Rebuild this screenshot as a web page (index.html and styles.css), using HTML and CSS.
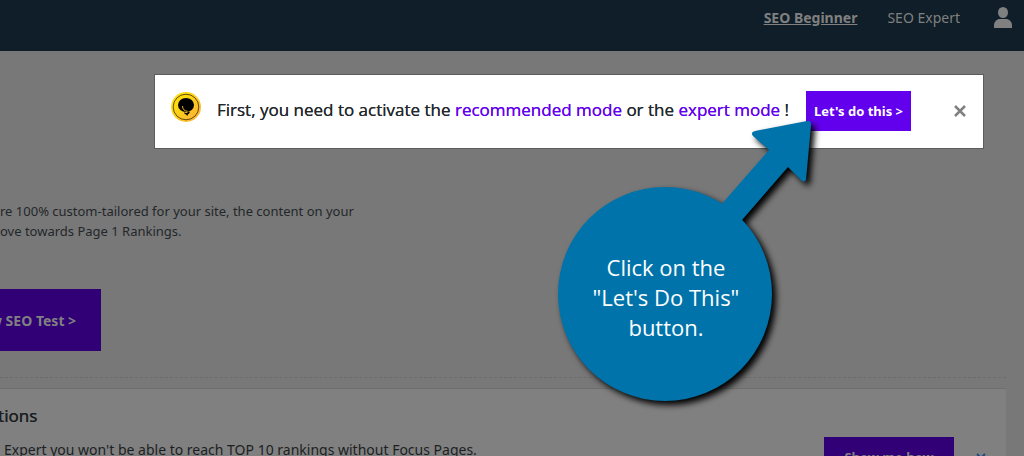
FILE: index.html
```html
<!DOCTYPE html>
<html lang="en">
  <head>
    <title>SEO Beginner</title>
    <meta charset="utf-8">
    <link rel="stylesheet" href="styles.css">
  </head>
  <body>

  <header class="topbar">
    <nav class="modes">
      <a class="mode active" href="#beginner">SEO Beginner</a>
      <a class="mode" href="#expert">SEO Expert</a>
    </nav>
    <a class="account" href="#account" aria-label="Account">
      <svg width="18" height="21" viewBox="0 0 18 21" fill="currentColor">
        <ellipse cx="9" cy="5.5" rx="5" ry="5.5"/>
        <path d="M0 21v-2.500C0 14.500 3 12 6 12h6c3 0 6 2.500 6 6.500V21z"/>
      </svg>
    </a>
  </header>

  <main class="content">
    <section class="notice">
      <svg class="logo" width="30" height="30" viewBox="0 0 30 30">
        <defs>
          <linearGradient id="gold" x1="0" y1="0" x2="1" y2="1">
            <stop offset="0.3" stop-color="#fedb10"/>
            <stop offset="1" stop-color="#fdaa3c"/>
          </linearGradient>
        </defs>
        <circle cx="15" cy="15" r="15" fill="url(#gold)"/>
        <circle cx="15" cy="15" r="12.800" fill="none" stroke="#3a2c08" stroke-width="0.8"/>
        <ellipse cx="15" cy="13" rx="8" ry="7"/>
        <path d="M11.500 14c0 3 1.800 5.200 5 5.200" fill="none" stroke="#fdc926" stroke-width="0.9"/>
        <path d="M13 20.300c2 1 3.500.8 4.500-.8l1.300.6c-.2 1.200-.9 1.900-1.800 2.200l-.6 1.700-1.200-1.600c-1.300 0-2-.8-2.200-2.100z"/>
      </svg>
      <p class="notice-text">First, you need to activate the <a href="#recommended">recommended mode</a> or the <a href="#expert">expert mode</a> !</p>
      <button class="btn" type="button">Let's do this &gt;</button>
      <button class="close" type="button" aria-label="Close">
        <svg width="12" height="12" viewBox="0 0 12 12" fill="none" stroke="currentColor" stroke-width="2.500">
          <path d="M1 1l10 10M11 1L1 11"/>
        </svg>
      </button>
    </section>

    <p class="intro">re 100% custom-tailored for your site, the content on your<br>ove towards Page 1 Rankings.</p>

    <button class="btn test" type="button">w SEO Test &gt;</button>

    <section class="panel">
      <div class="card">
        <div class="card-text">
          <h2>tions</h2>
          <p>Expert you won't be able to reach TOP 10 rankings without Focus Pages.</p>
        </div>
        <button class="btn show" type="button">Show me how</button>
        <button class="close dismiss" type="button" aria-label="Dismiss">
          <svg width="10" height="10" viewBox="0 0 10 10" fill="none" stroke="currentColor" stroke-width="2">
            <path d="M1 1l8 8M9 1L1 9"/>
          </svg>
        </button>
      </div>
    </section>
  </main>

  <!-- callout pointing at the notice button -->
  <aside class="callout">
    <svg class="bubble" width="270" height="300" viewBox="0 0 270 300">
      <path d="M170 92L219 36L203 22Q200 18 205 17L257 7Q261 6 261 11L256 66Q254 69 251 66L238 53L192 106L170 130Z"/>
      <circle cx="115" cy="180" r="107"/>
    </svg>
    <p class="callout-text">Click on the<br>"Let's Do This"<br>button.</p>
  </aside>

  </body>
</html>
```
FILE: styles.css
```css
* {
  box-sizing: border-box;
}
html {
  height: 100%;
}
body {
  margin: 0;
  height: 100%;
  background: #787878;
  color: #1c1f22;
  font-family: "Noto Sans","Open Sans",sans-serif;
  font-size: 14px;
  line-height: 20px;
  overflow: hidden;
}
h2, p {
  margin: 0;
}
svg {
  display: block;
}

.topbar {
  display: flex;
  justify-content: flex-end;
  align-items: flex-start;
  gap: 34px;
  height: 51px;
  padding: 7px 12px 0 0;
  background: #0f1e28;
}
.modes {
  display: flex;
  gap: 30px;
}
.mode {
  color: #808080;
  line-height: 22px;
  text-decoration: none;
}
.mode.active {
  font-weight: bold;
  text-decoration: underline;
}
.account {
  color: #808080;
}

.btn {
  border: 0;
  background: #6200ee;
  color: #fff;
  font-family: inherit;
  font-size: 13px;
  font-weight: bold;
  white-space: nowrap;
}
.close {
  padding: 0;
  border: 0;
  background: none;
  color: #808080;
}

.notice {
  display: flex;
  align-items: center;
  height: 75px;
  margin: 23px 40px 0 154px;
  padding: 0 17px 2px 16px;
  border: 1px solid #5c5c5c;
  background: #fff;
}
.logo {
  margin: 0 16px 8px 0;
}
.notice-text {
  padding-bottom: 2px;
  color: #23282d;
  font-family: "Open Sans","Noto Sans",sans-serif;
  font-size: 17px;
  text-shadow: 0 0 0 currentColor;
  white-space: nowrap;
}
.notice-text a {
  color: #6200ee;
  text-decoration: none;
}
.notice .btn {
  height: 40px;
  margin-left: auto;
  padding: 0 8px;
}
.notice .close {
  margin-left: 43px;
}

.intro {
  margin-top: 52px;
  color: #23272a;
  font-size: 13px;
}

.test {
  display: block;
  height: 62px;
  margin: 48px 0 0 -10px;
  padding: 0 25px 0 0;
  background: #310077;
  color: #808080;
  font-size: 14px;
}

.panel {
  margin: 26px 18px 0 0;
  padding-top: 10px;
  border-top: 1px dashed #6c6c6c;
}
.card {
  display: flex;
  align-items: flex-start;
  padding: 16px 20px 20px 0;
  border-top: 1px solid #6e6e6e;
  background: #808080;
}
.card-text {
  flex: 1;
}
.card h2 {
  margin-left: -2px;
  font-size: 17px;
  font-weight: normal;
  line-height: 22px;
  text-shadow: 0 0 0 currentColor;
}
.card p {
  padding: 13px 0 0 4px;
}
.show {
  width: 130px;
  height: 40px;
  margin-top: 32px;
  background: #310077;
  color: #808080;
}
.dismiss {
  margin: 48px 0 0 22px;
  color: #1c4b80;
}

.callout {
  position: absolute;
  top: 114px;
  right: 204px;
  width: 270px;
  height: 300px;
}
.bubble {
  fill: #0073aa;
  filter: drop-shadow(4px 4px 3px #000);
  overflow: visible;
}
.callout-text {
  position: absolute;
  top: 138px;
  left: 8px;
  width: 216px;
  color: #fff;
  font-family: "Open Sans","Noto Sans",sans-serif;
  font-size: 22px;
  line-height: 30px;
  text-align: center;
}
```
